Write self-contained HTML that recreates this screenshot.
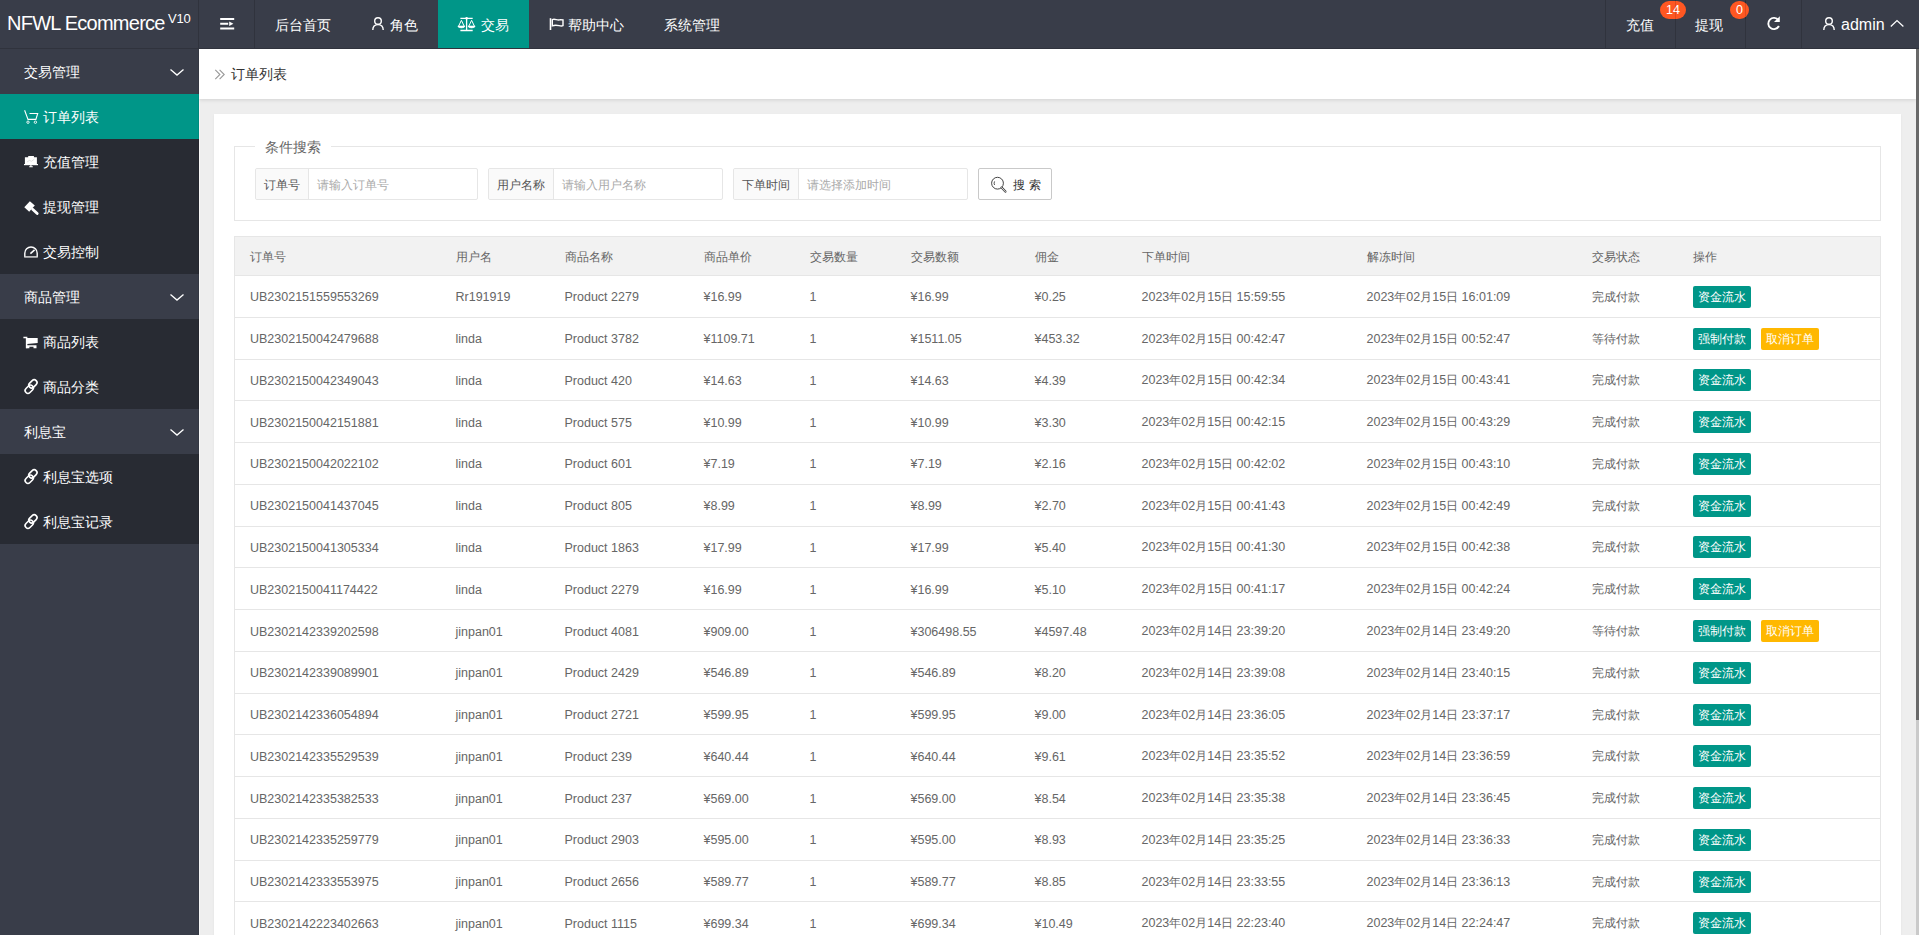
<!DOCTYPE html>
<html><head><meta charset="utf-8">
<style>
*{box-sizing:border-box;margin:0;padding:0}
html,body{width:1919px;height:935px;overflow:hidden;background:#eee;font-family:"Liberation Sans",sans-serif;font-size:14px;color:#666}
.hdr{position:absolute;left:0;top:0;width:1919px;height:49px;background:#393D49;border-bottom:1px solid #30333d}
.logo{position:absolute;left:7px;top:12px;color:#fff;font-size:20px;line-height:23px;letter-spacing:-0.75px;white-space:nowrap}
.v10{position:absolute;left:168px;top:11px;color:#fff;font-size:13px;line-height:15px;letter-spacing:-0.2px}
.vl{position:absolute;top:0;width:1px;height:48px;background:#30333d;z-index:3}
.nav{position:absolute;top:17px;height:16px;line-height:16px;color:#fff;font-size:14px;white-space:nowrap}
.act{position:absolute;left:438px;top:0;width:91px;height:48px;background:#009688}
.side{position:absolute;left:0;top:49px;width:199px;height:886px;background:#393D49}
.side div{height:45px;color:#fff;position:relative;font-size:14px}
.side div span{position:absolute;top:15px;line-height:16px;white-space:nowrap}
.side .g span{left:24px}
.side .c span{left:43px}
.side .c{background:#282B33}
.side .c.on{background:#009688}
.main{position:absolute;left:199px;top:49px;width:1717px;height:886px;background:#eee;overflow:hidden}
.bc{position:absolute;left:0;top:0;width:1717px;height:50px;background:#fff;box-shadow:0 1px 4px rgba(0,0,0,.12);z-index:1}
.bc span{position:absolute;left:32px;top:17px;font-size:14px;color:#333;line-height:16px}
.card{position:absolute;left:15px;top:65px;width:1687px;height:900px;background:#fff;box-shadow:0 1px 2px rgba(0,0,0,.06)}
.fs{position:absolute;left:20px;top:32px;width:1647px;height:75px;border:1px solid #e6e6e6}
.legend{position:absolute;left:20px;top:-8px;padding:0 10px;background:#fff;font-size:14px;color:#666;line-height:16px}
.ig{position:absolute;top:21px;height:32px;border:1px solid #e6e6e6;border-radius:2px;background:#fff}
.ig .lab{position:absolute;left:0;top:0;height:30px;border-right:1px solid #e6e6e6;background:#fafafa;border-radius:2px 0 0 2px}
.ig .lab span{position:absolute;left:8px;top:9px;line-height:14px;color:#555;font-size:12px;white-space:nowrap}
.ig .ph{position:absolute;top:9px;line-height:14px;color:#aaa;font-size:12px;white-space:nowrap}
.sbtn{position:absolute;top:21px;left:743px;width:74px;height:32px;border:1px solid #c9c9c9;border-radius:2px;background:#fff}
.sbtn span{position:absolute;left:34px;top:9px;line-height:14px;color:#333;font-size:12px;letter-spacing:4px;white-space:nowrap}
.tbl{position:absolute;left:20px;top:122px;width:1647px;border-collapse:collapse;table-layout:fixed}
.tbl th{height:39px;background:#f2f2f2;font-weight:normal;text-align:left;padding:2px 0 0 15px;font-size:12px;color:#666;border:1px solid #e6e6e6;border-left:none;border-right:none}
.tbl th:first-child{border-left:1px solid #e6e6e6}
.tbl th:last-child{border-right:1px solid #e6e6e6}
.tbl td{height:41.78px;padding:2px 0 0 15px;font-size:12.5px;color:#666;border-bottom:1px solid #e6e6e6;white-space:nowrap}
.tbl td:first-child{border-left:1px solid #e6e6e6}
.tbl td:last-child{border-right:1px solid #e6e6e6}
.tbl i{font-style:normal;font-size:12px}
.btn{display:inline-block;vertical-align:middle;position:relative;top:-0.5px;height:22px;line-height:22px;padding:0 5px;color:#fff;font-size:12px;border-radius:2px;margin-right:10px}
.btn.g{background:#009688}
.btn.y{background:#FFB800}
.sb{position:absolute;left:1916px;top:49px;width:3px;height:886px;background:#cacaca}
.sb i{position:absolute;left:0;top:0;width:3px;height:671px;background:#686868}
.badge{position:absolute;top:1px;height:18px;line-height:19px;border-radius:9px;background:#FF5722;color:#fff;font-size:12.5px;text-align:center;z-index:4}
.b14:after{left:15px}.b0:after{left:15px}
.badge:after{content:"";position:absolute;top:0;width:1px;height:18px;background:rgba(0,0,0,.12)}
svg{position:absolute;overflow:visible}
</style></head><body>
<div class="hdr">
  <div class="logo">NFWL Ecommerce</div><div class="v10">V10</div>
  <div class="vl" style="left:198px"></div>
  <div class="vl" style="left:254px"></div>
  <svg style="left:216px;top:12px" width="24" height="24" viewBox="0 0 24 24"><path d="M4.2 7H18.2M4.2 11.8H12.2M4.2 16.4H18.2" stroke="#fff" stroke-width="2" fill="none"/><path d="M13.2 9.6L17.4 11.8L13.2 14Z" fill="#fff"/></svg>
  <div class="nav" style="left:275px">后台首页</div>
  <svg style="left:368px;top:12px" width="24" height="24" viewBox="0 0 24 24"><circle cx="10" cy="9" r="3.3" stroke="#fff" stroke-width="1.4" fill="none"/><path d="M4.8 18C4.8 14.6 7 12.6 10 12.6S15.2 14.6 15.2 18" stroke="#fff" stroke-width="1.4" fill="none"/></svg>
  <div class="nav" style="left:390px">角色</div>
  <div class="act"></div>
  <svg style="left:454px;top:12px" width="26" height="24" viewBox="0 0 26 24"><path d="M6.4 6.4H18.7M12.6 6.4V18.5M6.4 18.5H18.7" stroke="#fff" stroke-width="1.3" fill="none"/><circle cx="12.6" cy="6.2" r="1.3" fill="#fff"/><path d="M7.4 8.3L4.4 14.6M7.4 8.3L10.4 14.6M17.6 8.3L14.6 14.6M17.6 8.3L20.6 14.6" stroke="#fff" stroke-width="1" fill="none"/><path d="M3.9 14H10.9A3.5 1.9 0 0 1 3.9 14ZM14.1 14H21.1A3.5 1.9 0 0 1 14.1 14Z" fill="#fff" stroke="#fff" stroke-width="0.6"/></svg>
  <div class="nav" style="left:481px">交易</div>
  <svg style="left:544px;top:12px" width="24" height="24" viewBox="0 0 24 24"><path d="M6.5 6.2V18" stroke="#fff" stroke-width="1.6" fill="none"/><path d="M8.3 7.6C11 6.2 13.5 9 16.4 7.6L19 7.8V13.6C16.4 15 13.5 12 8.3 13.8Z" stroke="#fff" stroke-width="1.4" fill="none"/></svg>
  <div class="nav" style="left:568px">帮助中心</div>
  <div class="nav" style="left:664px">系统管理</div>
  <div class="vl" style="left:1605px"></div>
  <div class="vl" style="left:1675px"></div>
  <div class="vl" style="left:1745px"></div>
  <div class="vl" style="left:1801px"></div>
  <div class="nav" style="left:1626px">充值</div>
  <div class="badge b14" style="left:1660px;width:26px">14</div>
  <div class="nav" style="left:1695px">提现</div>
  <div class="badge b0" style="left:1730px;width:19px">0</div>
  <svg style="left:1762px;top:11px" width="24" height="24" viewBox="0 0 24 24"><path d="M16.4 9.2A5.6 5.6 0 1 0 16.9 15" stroke="#fff" stroke-width="1.9" fill="none"/><path d="M17.8 5.2V11H12Z" fill="#fff"/></svg>
  <svg style="left:1817px;top:12px" width="24" height="24" viewBox="0 0 24 24"><circle cx="12" cy="9" r="3.3" stroke="#fff" stroke-width="1.4" fill="none"/><path d="M6.8 18C6.8 14.6 9 12.6 12 12.6S17.2 14.6 17.2 18" stroke="#fff" stroke-width="1.4" fill="none"/></svg>
  <div class="nav" style="left:1841px;font-size:16px;top:15px;height:19px;line-height:19px">admin</div>
  <svg style="left:1884px;top:12px" width="24" height="24" viewBox="0 0 24 24"><path d="M6.8 14.5L13 8.6L19.4 14.5" stroke="#fff" stroke-width="1.3" fill="none"/></svg>
</div>
<div class="side">
  <div class="g"><span>交易管理</span><svg style="left:164px;top:11px" width="28" height="24" viewBox="0 0 28 24"><path d="M6.5 9.4L13 15.1L19.5 9.4" stroke="#fff" stroke-width="1.3" fill="none"/></svg></div>
  <div class="c on"><svg style="left:20px;top:10px" width="22" height="24" viewBox="0 0 22 24"><path d="M4.6 6.2L8 15.4H15.9L17.7 9.5H9.5" stroke="#fff" stroke-width="1.1" fill="none"/><circle cx="8" cy="18.2" r="1.2" stroke="#fff" stroke-width="0.9" fill="none"/><circle cx="15.4" cy="18.2" r="1.2" stroke="#fff" stroke-width="0.9" fill="none"/></svg><span>订单列表</span></div>
  <div class="c"><svg style="left:20px;top:9px" width="22" height="24" viewBox="0 0 22 24"><path d="M8.2 7.9H13.9V9.2H16.9V16.7H4.9V9.2H8.2Z" fill="#fff"/><path d="M4 16.6H18" stroke="#fff" stroke-width="1.2"/><path d="M10.9 16.6V18.4M9.2 18.8H12.8" stroke="#fff" stroke-width="1.1"/><path d="M7 14L9.5 12.4L11.5 13.3L14.5 11" stroke="#ccc" stroke-width="0.6" fill="none"/></svg><span>充值管理</span></div>
  <div class="c"><svg style="left:20px;top:11px" width="22" height="24" viewBox="0 0 22 24"><path d="M4.3 12.3L9.9 6.2L14.8 10.6L9.2 16.7Z" fill="#fff"/><path d="M12.6 14.2L17.2 18.6" stroke="#fff" stroke-width="2.8" stroke-linecap="round"/></svg><span>提现管理</span></div>
  <div class="c"><svg style="left:20px;top:10px" width="22" height="24" viewBox="0 0 22 24"><path d="M4.8 18V14.2A6.2 6.2 0 0 1 17.2 14.2V18" stroke="#fff" stroke-width="1.4" fill="none"/><path d="M4.2 17.9H17.8" stroke="#d8d8d8" stroke-width="1.5"/><path d="M10.4 14.6L14.6 10.9" stroke="#fff" stroke-width="1.5"/></svg><span>交易控制</span></div>
  <div class="g"><span>商品管理</span><svg style="left:164px;top:11px" width="28" height="24" viewBox="0 0 28 24"><path d="M6.5 9.4L13 15.1L19.5 9.4" stroke="#fff" stroke-width="1.3" fill="none"/></svg></div>
  <div class="c"><svg style="left:20px;top:11px" width="22" height="24" viewBox="0 0 22 24"><path d="M3.4 7.5H6.6V18.2" stroke="#fff" stroke-width="1.5" fill="none"/><path d="M6.6 8H17.7V13.1L7 14Z" fill="#fff"/><path d="M6.3 15.2H16.5V18.2H13.5V16.8H9.4V18.2H6.3Z" fill="#fff"/></svg><span>商品列表</span></div>
  <div class="c"><svg style="left:20px;top:11px" width="22" height="24" viewBox="0 0 22 24"><g transform="rotate(-45 11 11.5)" stroke="#fff" stroke-width="1.6" fill="none"><rect x="3.2" y="9.4" width="9.2" height="5.6" rx="2.8"/><rect x="9.6" y="8.2" width="9.2" height="5.6" rx="2.8"/></g></svg><span>商品分类</span></div>
  <div class="g"><span>利息宝</span><svg style="left:164px;top:11px" width="28" height="24" viewBox="0 0 28 24"><path d="M6.5 9.4L13 15.1L19.5 9.4" stroke="#fff" stroke-width="1.3" fill="none"/></svg></div>
  <div class="c"><svg style="left:20px;top:11px" width="22" height="24" viewBox="0 0 22 24"><g transform="rotate(-45 11 11.5)" stroke="#fff" stroke-width="1.6" fill="none"><rect x="3.2" y="9.4" width="9.2" height="5.6" rx="2.8"/><rect x="9.6" y="8.2" width="9.2" height="5.6" rx="2.8"/></g></svg><span>利息宝选项</span></div>
  <div class="c"><svg style="left:20px;top:11px" width="22" height="24" viewBox="0 0 22 24"><g transform="rotate(-45 11 11.5)" stroke="#fff" stroke-width="1.6" fill="none"><rect x="3.2" y="9.4" width="9.2" height="5.6" rx="2.8"/><rect x="9.6" y="8.2" width="9.2" height="5.6" rx="2.8"/></g></svg><span>利息宝记录</span></div>
</div>
<div class="main">
  <div class="bc"><svg style="left:15px;top:19px" width="12" height="13" viewBox="0 0 12 13"><path d="M1.3 1.8L5.9 6.5L1.3 11.2M5.6 1.8L10.2 6.5L5.6 11.2" stroke="#999" stroke-width="1.1" fill="none"/></svg><span>订单列表</span></div>
  <div class="card">
    <div class="fs">
      <div class="legend">条件搜索</div>
      <div class="ig" style="left:20px;width:223px"><div class="lab" style="width:53px"><span>订单号</span></div><div class="ph" style="left:61px">请输入订单号</div></div>
      <div class="ig" style="left:253px;width:235px"><div class="lab" style="width:65px"><span>用户名称</span></div><div class="ph" style="left:73px">请输入用户名称</div></div>
      <div class="ig" style="left:498px;width:235px"><div class="lab" style="width:65px"><span>下单时间</span></div><div class="ph" style="left:73px">请选择添加时间</div></div>
      <div class="sbtn"><svg style="left:8px;top:4px" width="22" height="22" viewBox="0 0 22 22"><circle cx="10.5" cy="10.2" r="5.9" stroke="#444" stroke-width="1" fill="none"/><path d="M7.6 8.4A3.5 3.5 0 0 0 7.6 12" stroke="#444" stroke-width="0.9" fill="none"/><path d="M14.6 14.6L18.4 18.6" stroke="#444" stroke-width="2.2" stroke-linecap="round"/><path d="M14.6 14.6L18.4 18.6" stroke="#fff" stroke-width="0.8" stroke-linecap="round"/></svg><span>搜索</span></div>
    </div>
    <table class="tbl">
      <colgroup><col style="width:206px"><col style="width:109px"><col style="width:139px"><col style="width:106px"><col style="width:101px"><col style="width:124px"><col style="width:107px"><col style="width:225px"><col style="width:225px"><col style="width:101px"><col style="width:203px"></colgroup>
      <thead><tr><th>订单号</th><th>用户名</th><th>商品名称</th><th>商品单价</th><th>交易数量</th><th>交易数额</th><th>佣金</th><th>下单时间</th><th>解冻时间</th><th>交易状态</th><th>操作</th></tr></thead>
      <tbody>
<tr><td>UB2302151559553269</td><td>Rr191919</td><td>Product 2279</td><td>¥16.99</td><td>1</td><td>¥16.99</td><td>¥0.25</td><td>2023<i>年</i>02<i>月</i>15<i>日</i> 15:59:55</td><td>2023<i>年</i>02<i>月</i>15<i>日</i> 16:01:09</td><td><i>完成付款</i></td><td><span class="btn g">资金流水</span></td></tr>
<tr><td>UB2302150042479688</td><td>linda</td><td>Product 3782</td><td>¥1109.71</td><td>1</td><td>¥1511.05</td><td>¥453.32</td><td>2023<i>年</i>02<i>月</i>15<i>日</i> 00:42:47</td><td>2023<i>年</i>02<i>月</i>15<i>日</i> 00:52:47</td><td><i>等待付款</i></td><td><span class="btn g">强制付款</span><span class="btn y">取消订单</span></td></tr>
<tr><td>UB2302150042349043</td><td>linda</td><td>Product 420</td><td>¥14.63</td><td>1</td><td>¥14.63</td><td>¥4.39</td><td>2023<i>年</i>02<i>月</i>15<i>日</i> 00:42:34</td><td>2023<i>年</i>02<i>月</i>15<i>日</i> 00:43:41</td><td><i>完成付款</i></td><td><span class="btn g">资金流水</span></td></tr>
<tr><td>UB2302150042151881</td><td>linda</td><td>Product 575</td><td>¥10.99</td><td>1</td><td>¥10.99</td><td>¥3.30</td><td>2023<i>年</i>02<i>月</i>15<i>日</i> 00:42:15</td><td>2023<i>年</i>02<i>月</i>15<i>日</i> 00:43:29</td><td><i>完成付款</i></td><td><span class="btn g">资金流水</span></td></tr>
<tr><td>UB2302150042022102</td><td>linda</td><td>Product 601</td><td>¥7.19</td><td>1</td><td>¥7.19</td><td>¥2.16</td><td>2023<i>年</i>02<i>月</i>15<i>日</i> 00:42:02</td><td>2023<i>年</i>02<i>月</i>15<i>日</i> 00:43:10</td><td><i>完成付款</i></td><td><span class="btn g">资金流水</span></td></tr>
<tr><td>UB2302150041437045</td><td>linda</td><td>Product 805</td><td>¥8.99</td><td>1</td><td>¥8.99</td><td>¥2.70</td><td>2023<i>年</i>02<i>月</i>15<i>日</i> 00:41:43</td><td>2023<i>年</i>02<i>月</i>15<i>日</i> 00:42:49</td><td><i>完成付款</i></td><td><span class="btn g">资金流水</span></td></tr>
<tr><td>UB2302150041305334</td><td>linda</td><td>Product 1863</td><td>¥17.99</td><td>1</td><td>¥17.99</td><td>¥5.40</td><td>2023<i>年</i>02<i>月</i>15<i>日</i> 00:41:30</td><td>2023<i>年</i>02<i>月</i>15<i>日</i> 00:42:38</td><td><i>完成付款</i></td><td><span class="btn g">资金流水</span></td></tr>
<tr><td>UB2302150041174422</td><td>linda</td><td>Product 2279</td><td>¥16.99</td><td>1</td><td>¥16.99</td><td>¥5.10</td><td>2023<i>年</i>02<i>月</i>15<i>日</i> 00:41:17</td><td>2023<i>年</i>02<i>月</i>15<i>日</i> 00:42:24</td><td><i>完成付款</i></td><td><span class="btn g">资金流水</span></td></tr>
<tr><td>UB2302142339202598</td><td>jinpan01</td><td>Product 4081</td><td>¥909.00</td><td>1</td><td>¥306498.55</td><td>¥4597.48</td><td>2023<i>年</i>02<i>月</i>14<i>日</i> 23:39:20</td><td>2023<i>年</i>02<i>月</i>14<i>日</i> 23:49:20</td><td><i>等待付款</i></td><td><span class="btn g">强制付款</span><span class="btn y">取消订单</span></td></tr>
<tr><td>UB2302142339089901</td><td>jinpan01</td><td>Product 2429</td><td>¥546.89</td><td>1</td><td>¥546.89</td><td>¥8.20</td><td>2023<i>年</i>02<i>月</i>14<i>日</i> 23:39:08</td><td>2023<i>年</i>02<i>月</i>14<i>日</i> 23:40:15</td><td><i>完成付款</i></td><td><span class="btn g">资金流水</span></td></tr>
<tr><td>UB2302142336054894</td><td>jinpan01</td><td>Product 2721</td><td>¥599.95</td><td>1</td><td>¥599.95</td><td>¥9.00</td><td>2023<i>年</i>02<i>月</i>14<i>日</i> 23:36:05</td><td>2023<i>年</i>02<i>月</i>14<i>日</i> 23:37:17</td><td><i>完成付款</i></td><td><span class="btn g">资金流水</span></td></tr>
<tr><td>UB2302142335529539</td><td>jinpan01</td><td>Product 239</td><td>¥640.44</td><td>1</td><td>¥640.44</td><td>¥9.61</td><td>2023<i>年</i>02<i>月</i>14<i>日</i> 23:35:52</td><td>2023<i>年</i>02<i>月</i>14<i>日</i> 23:36:59</td><td><i>完成付款</i></td><td><span class="btn g">资金流水</span></td></tr>
<tr><td>UB2302142335382533</td><td>jinpan01</td><td>Product 237</td><td>¥569.00</td><td>1</td><td>¥569.00</td><td>¥8.54</td><td>2023<i>年</i>02<i>月</i>14<i>日</i> 23:35:38</td><td>2023<i>年</i>02<i>月</i>14<i>日</i> 23:36:45</td><td><i>完成付款</i></td><td><span class="btn g">资金流水</span></td></tr>
<tr><td>UB2302142335259779</td><td>jinpan01</td><td>Product 2903</td><td>¥595.00</td><td>1</td><td>¥595.00</td><td>¥8.93</td><td>2023<i>年</i>02<i>月</i>14<i>日</i> 23:35:25</td><td>2023<i>年</i>02<i>月</i>14<i>日</i> 23:36:33</td><td><i>完成付款</i></td><td><span class="btn g">资金流水</span></td></tr>
<tr><td>UB2302142333553975</td><td>jinpan01</td><td>Product 2656</td><td>¥589.77</td><td>1</td><td>¥589.77</td><td>¥8.85</td><td>2023<i>年</i>02<i>月</i>14<i>日</i> 23:33:55</td><td>2023<i>年</i>02<i>月</i>14<i>日</i> 23:36:13</td><td><i>完成付款</i></td><td><span class="btn g">资金流水</span></td></tr>
<tr><td>UB2302142223402663</td><td>jinpan01</td><td>Product 1115</td><td>¥699.34</td><td>1</td><td>¥699.34</td><td>¥10.49</td><td>2023<i>年</i>02<i>月</i>14<i>日</i> 22:23:40</td><td>2023<i>年</i>02<i>月</i>14<i>日</i> 22:24:47</td><td><i>完成付款</i></td><td><span class="btn g">资金流水</span></td></tr>
      </tbody>
    </table>
  </div>
</div>
<div class="sb"><i></i></div>
<div style="position:absolute;left:198px;top:49px;width:1px;height:886px;background:rgba(0,0,0,.07)"></div>
<div style="position:absolute;left:199px;top:99px;width:1px;height:836px;background:#f7f7f7"></div>
</body></html>
